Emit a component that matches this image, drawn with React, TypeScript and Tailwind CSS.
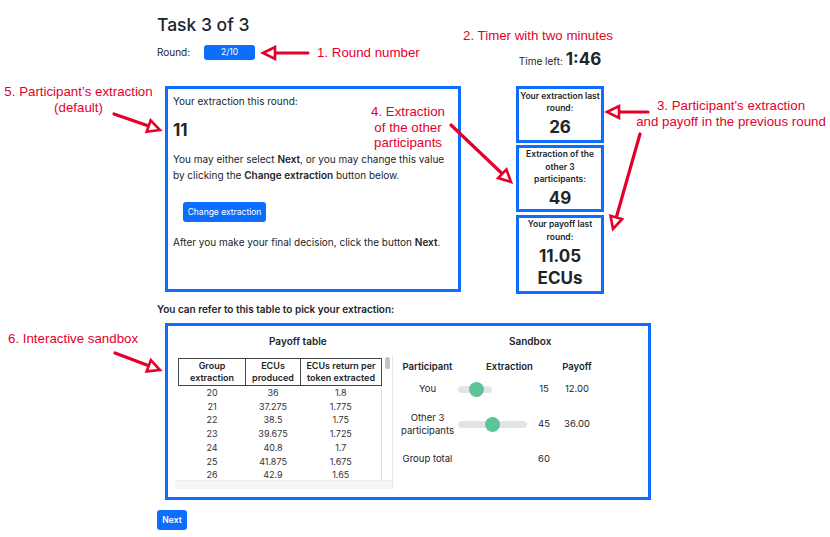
import React from "react";

const RED = "#e4002b";

function Arrow({ x1, y1, x2, y2 }: { x1: number; y1: number; x2: number; y2: number }) {
  const dx = x2 - x1;
  const dy = y2 - y1;
  const len = Math.hypot(dx, dy);
  const ux = dx / len;
  const uy = dy / len;
  const hl = 12;
  const hw = 6;
  const bx = x2 - ux * hl;
  const by = y2 - uy * hl;
  const px = -uy;
  const py = ux;
  const pts = `${x2},${y2} ${bx + px * hw},${by + py * hw} ${bx - px * hw},${by - py * hw}`;
  return (
    <g>
      <line x1={x1} y1={y1} x2={bx} y2={by} stroke={RED} strokeWidth={3.2} strokeLinecap="round" />
      <polygon points={pts} fill="white" stroke={RED} strokeWidth={2.6} strokeLinejoin="miter" />
    </g>
  );
}

const rows: [string, string, string][] = [
  ["20", "36", "1.8"],
  ["21", "37.275", "1.775"],
  ["22", "38.5", "1.75"],
  ["23", "39.675", "1.725"],
  ["24", "40.8", "1.7"],
  ["25", "41.875", "1.675"],
  ["26", "42.9", "1.65"],
];

function Slider({ width, pos }: { width: number; pos: number }) {
  return (
    <div className="relative h-[7px] rounded-full bg-[#e4e4e4]" style={{ width }}>
      <div
        className="absolute top-[-4px] h-[15px] w-[15px] rounded-full bg-[#5cc498]"
        style={{ left: pos - 7.5 }}
      />
    </div>
  );
}

export default function App() {
  return (
    <div
      className="relative h-[537px] w-[830px] overflow-hidden bg-white text-[#212529]"
      style={{ fontFamily: "Inter, 'Liberation Sans', sans-serif" }}
    >
      <div className="pl-[157px] pt-[14px]">
        {/* top section */}
        <div className="flex h-[72px]">
          <div className="w-[359px]">
            <h1 className="text-[17.5px] leading-[22px] font-medium">Task 3 of 3</h1>
            <div className="mt-[9px] flex items-center text-[10px]">
              <span className="w-[47px]">Round:</span>
              <span className="flex h-[15px] w-[51px] items-center justify-center rounded-[3px] bg-[#0d6efd] text-[8.5px] text-white">
                2/10
              </span>
            </div>
          </div>
          <div className="w-[88px] pt-[33px] text-center whitespace-nowrap">
            <span className="text-[10px]">Time left: </span>
            <span className="text-[17px] leading-[20px] font-bold">1:46</span>
          </div>
        </div>

        {/* middle row */}
        <div className="flex">
          <div className="ml-[8px] h-[206px] w-[296px] border-[3px] border-[#0d6efd] pl-[5px] pt-[4px] text-[10px] leading-[16px]">
            <div>Your extraction this round:</div>
            <div className="mt-[10px] text-[17px] leading-[22px] font-bold">11</div>
            <p className="mt-[10px]">
              You may either select <b className="font-semibold">Next</b>, or you may change this value by clicking
              the <b className="font-semibold">Change extraction</b> button below.
            </p>
            <button className="ml-[10px] mt-[19px] flex h-[20px] w-[83px] items-center justify-center rounded-[3px] bg-[#0d6efd] text-[8.5px] text-white">
              Change extraction
            </button>
            <p className="mt-[12px]">
              After you make your final decision, click the button <b className="font-semibold">Next</b>.
            </p>
          </div>

          <div className="ml-[55px] flex w-[88px] flex-col gap-[2px] text-center">
            <div className="h-[57px] border-[3px] border-[#0d6efd] pt-[1px]">
              <div className="text-[8.5px] leading-[12px] font-semibold">Your extraction last round:</div>
              <div className="mt-[3px] text-[17px] leading-[20px] font-bold">26</div>
            </div>
            <div className="h-[67px] border-[3px] border-[#0d6efd]">
              <div className="px-[4px] text-[8.5px] leading-[12.5px] font-semibold">
                Extraction of the other 3 participants:
              </div>
              <div className="mt-[2px] text-[17px] leading-[20px] font-bold">49</div>
            </div>
            <div className="mt-[1px] h-[79px] border-[3px] border-[#0d6efd]">
              <div className="px-[8px] text-[8.5px] leading-[12.5px] font-semibold">Your payoff last round:</div>
              <div className="mt-[2px] text-[17px] leading-[22px] font-bold">
                11.05
                <br />
                ECUs
              </div>
            </div>
          </div>
        </div>

        <div className="mt-[9px] text-[10px] leading-[12px] font-semibold">
          You can refer to this table to pick your extraction:
        </div>

        {/* sandbox box */}
        <div className="ml-[8px] mt-[8px] flex h-[177px] w-[486px] border-[3px] border-[#0d6efd] pl-[7px] pt-[9px]">
          <div className="w-[218px]">
            <div className="pl-[94px] text-[10px] leading-[12px] font-semibold whitespace-nowrap">Payoff table</div>
            <div className="relative mt-[8px] h-[134px] w-[218px] overflow-hidden border-r border-[#e6e6e6] bg-white">
              <table className="ml-[3px] mt-[3px] w-[204px] border-collapse text-center text-[9px] text-[#333]">
                <thead>
                  <tr className="leading-[12px] font-semibold text-[#212529]">
                    <th className="w-[67px] border border-[#444] py-[1px] font-semibold">Group extraction</th>
                    <th className="w-[55px] border border-[#444] py-[1px] font-semibold">ECUs produced</th>
                    <th className="border border-[#444] py-[1px] font-semibold">ECUs return per token extracted</th>
                  </tr>
                </thead>
                <tbody className="border-r border-[#ddd]">
                  {rows.map((r) => (
                    <tr key={r[0]} className="h-[13.7px] leading-[13.7px]">
                      <td>{r[0]}</td>
                      <td>{r[1]}</td>
                      <td>{r[2]}</td>
                    </tr>
                  ))}
                </tbody>
              </table>
              <div className="absolute right-[2px] top-[2px] h-[12px] w-[5px] rounded-full bg-[#c4c4c4]" />
              <div className="absolute bottom-0 left-0 h-[9px] w-full border-t border-[#ececec] bg-[#f5f5f5]" />
            </div>
          </div>

          <div className="ml-[6px] flex flex-col text-[9.5px]">
            <div className="pl-[110px] text-[10px] leading-[12px] font-semibold">Sandbox</div>
            <div className="mt-[14px] grid grid-cols-[57px_77px_22px_44px] items-center text-center">
              <div className="leading-[12px] font-semibold">Participant</div>
              <div className="col-span-2 pl-[8px] leading-[12px] font-semibold">Extraction</div>
              <div className="leading-[12px] font-semibold">Payoff</div>

              <div className="mt-[8px] leading-[16px]">You</div>
              <div className="mt-[8px] flex h-[16px] items-center pl-[2px]">
                <Slider width={34} pos={18} />
              </div>
              <div className="mt-[8px] leading-[16px]">15</div>
              <div className="mt-[8px] leading-[16px]">12.00</div>

              <div className="mt-[14px] leading-[13px]">
                Other 3
                <br />
                participants
              </div>
              <div className="mt-[14px] flex h-[26px] items-center pl-[2px]">
                <Slider width={69} pos={34} />
              </div>
              <div className="mt-[14px] leading-[16px]">45</div>
              <div className="mt-[14px] leading-[16px]">36.00</div>

              <div className="mt-[14px] leading-[16px]">Group total</div>
              <div className="mt-[14px]" />
              <div className="mt-[14px] leading-[16px]">60</div>
              <div className="mt-[14px]" />
            </div>
          </div>
        </div>

        <button className="mt-[10px] flex h-[20px] w-[30px] items-center justify-center rounded-[3px] bg-[#0d6efd] text-[8.5px] font-semibold text-white">
          Next
        </button>
      </div>

      {/* annotations */}
      <div
        className="pointer-events-none absolute inset-0 text-[13.3px] leading-[16px]"
        style={{ fontFamily: "'Liberation Sans', Arial, sans-serif", color: RED }}
      >
        <div className="absolute left-[317px] top-[45px] whitespace-nowrap">1. Round number</div>
        <div className="absolute left-[463px] top-[28px] whitespace-nowrap">2. Timer with two minutes</div>
        <div className="absolute left-[620px] top-[98px] w-[222px] text-center">
          3. Participant's extraction
          <br />
          and payoff in the previous round
        </div>
        <div className="absolute left-[358px] top-[104px] w-[100px] text-center leading-[15.5px]">
          4. Extraction
          <br />
          of the other
          <br />
          participants
        </div>
        <div className="absolute left-[0px] top-[84px] w-[157px] text-center">
          5. Participant’s extraction
          <br />
          (default)
        </div>
        <div className="absolute left-[8px] top-[331px] whitespace-nowrap">6. Interactive sandbox</div>
        <svg className="absolute inset-0" width={830} height={537}>
          <Arrow x1={308} y1={53} x2={263} y2={53} />
          <Arrow x1={648} y1={112} x2={607} y2={112} />
          <Arrow x1={640} y1={134} x2={613} y2={229} />
          <Arrow x1={451} y1={125} x2={511} y2={182} />
          <Arrow x1={114} y1={114} x2={160} y2={130} />
          <Arrow x1={115} y1={353} x2={160} y2={370} />
        </svg>
      </div>
    </div>
  );
}
